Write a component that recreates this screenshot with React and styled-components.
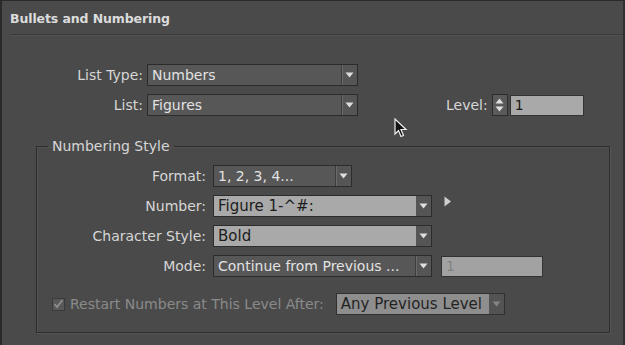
import React from "react";
import styled, { createGlobalStyle } from "styled-components";

const GlobalStyle = createGlobalStyle`
  html, body {
    margin: 0;
    padding: 0;
    background: #4a4a4a;
  }
  body {
    font-family: "DejaVu Sans", "Liberation Sans", sans-serif;
  }
`;

const Window = styled.div`
  width: 625px;
  height: 345px;
  box-sizing: border-box;
  background: #4a4a4a;
  border-left: 2px solid #2a2a2a;
  border-right: 2px solid #2f2f2f;
  border-top: 1px solid #2a2a2a;
  overflow: hidden;
  position: relative;
`;

const Header = styled.div`
  margin-left: 8px;
  height: 33px;
  border-bottom: 1px solid #3a3a3a;
  box-shadow: 0 1px 0 #515151;
  display: flex;
  align-items: center;
`;

const Title = styled.div`
  color: #dcdcdc;
  font-size: 12.5px;
  font-weight: bold;
  letter-spacing: -0.1px;
  padding-top: 1px;
`;

const Body = styled.div`
  padding-top: 29px;
`;

const TopGrid = styled.div`
  display: grid;
  grid-template-columns: 141px 210px;
  column-gap: 4px;
  row-gap: 8px;
  align-items: center;
`;

const Label = styled.div`
  color: ${(p) => (p.$dim ? "#8a8a8a" : "#d6d6d6")};
  font-size: 14px;
  text-align: right;
  white-space: nowrap;
`;

const Select = styled.div`
  box-sizing: border-box;
  width: ${(p) => p.$w}px;
  height: 22px;
  display: flex;
  align-items: stretch;
  border: 1px solid #2c2c2c;
  background: #565656;
  opacity: ${(p) => (p.$dim ? 0.85 : 1)};
`;

const SelectText = styled.div`
  flex: 1;
  display: flex;
  align-items: center;
  padding-left: 4px;
  font-size: ${(p) => (p.$light ? 15 : 14)}px;
  white-space: nowrap;
  overflow: hidden;
  color: ${(p) => (p.$light ? "#1c1c1c" : "#e2e2e2")};
  background: ${(p) => (p.$light ? (p.$dim ? "#9a9a9a" : "#a9a9a9") : "#575757")};
`;

const ArrowBox = styled.div`
  width: 15px;
  display: flex;
  align-items: center;
  justify-content: center;
  background: #555;
  border-left: ${(p) => (p.$split ? "1px solid #3c3c3c" : "none")};
  box-shadow: ${(p) => (p.$split ? "inset 1px 0 0 #6a6a6a" : "none")};
`;

const Down = ({ color = "#dedede" }) => (
  <svg width="9" height="6" viewBox="0 0 9 6">
    <path d="M0.5 0.5 H8.5 L4.5 5.5 Z" fill={color} />
  </svg>
);

const Dropdown = ({ w, text, light, dim, split = true }) => (
  <Select $w={w} $dim={dim}>
    <SelectText $light={light} $dim={dim}>{text}</SelectText>
    <ArrowBox $split={split}>
      <Down color={dim ? "#8e8e8e" : "#dedede"} />
    </ArrowBox>
  </Select>
);

const LevelGroup = styled.div`
  display: flex;
  align-items: center;
  grid-column: 3;
  margin-left: 85px;
`;

const LevelLabel = styled(Label)`
  margin-right: 4px;
`;

const Spinner = styled.div`
  box-sizing: border-box;
  width: 16px;
  height: 22px;
  border: 1px solid #2c2c2c;
  background: #5a5a5a;
  display: flex;
  flex-direction: column;
  align-items: center;
  justify-content: space-around;
  padding: 2px 0;
  margin-right: 2px;
`;

const Field = styled.div`
  box-sizing: border-box;
  width: ${(p) => p.$w}px;
  height: 21px;
  border: 1px solid #333;
  background: ${(p) => (p.$dim ? "#a2a2a2" : "#a9a9a9")};
  color: ${(p) => (p.$dim ? "#828282" : "#1a1a1a")};
  font-size: 14px;
  display: flex;
  align-items: center;
  padding-left: 4px;
  margin-left: ${(p) => p.$ml || 0}px;
`;

const Group = styled.fieldset`
  margin: 22px 13px 0 34px;
  padding: 4px 0 16px 0;
  border: 1px solid #2d2d2d;
  box-shadow: 1px 1px 0 #555, inset 1px 1px 0 #525252;
  height: 195px;
  box-sizing: border-box;
`;

const Legend = styled.legend`
  color: #d6d6d6;
  font-size: 14px;
  padding: 0 4px;
  margin-left: 11px;
`;

const GroupGrid = styled.div`
  display: grid;
  grid-template-columns: 169px auto;
  column-gap: 7px;
  row-gap: 8px;
  align-items: center;
  justify-items: start;
  margin-top: 7px;

  & > ${Label} {
    justify-self: end;
  }
`;

const Row = styled.div`
  display: flex;
  align-items: center;
`;

const Play = styled.svg`
  margin-left: 12px;
  margin-top: -9px;
`;

const CheckRow = styled.div`
  display: flex;
  align-items: center;
  margin-top: 16px;
  margin-left: 15px;
`;

const Check = styled.div`
  box-sizing: border-box;
  width: 13px;
  height: 13px;
  background: #585858;
  border: 1px solid #3a3a3a;
  display: flex;
  align-items: center;
  justify-content: center;
  margin-right: 5px;
`;

const CheckLabel = styled(Label)`
  margin-right: 12px;
`;

const Cursor = styled.svg`
  position: absolute;
  left: 392px;
  top: 117px;
`;

export default function App() {
  return (
    <>
      <GlobalStyle />
      <Window>
        <Header>
          <Title>Bullets and Numbering</Title>
        </Header>
        <Body>
          <TopGrid>
            <Label>List Type:</Label>
            <Dropdown w={211} text="Numbers" />
            <div />
            <Label>List:</Label>
            <Dropdown w={211} text="Figures" />
            <LevelGroup>
              <LevelLabel>Level:</LevelLabel>
              <Spinner>
                <svg width="9" height="6" viewBox="0 0 9 6">
                  <path d="M0.5 5.5 H8.5 L4.5 0.5 Z" fill="#dedede" />
                </svg>
                <Down />
              </Spinner>
              <Field $w={74}>1</Field>
            </LevelGroup>
          </TopGrid>
          <Group>
            <Legend>Numbering Style</Legend>
            <GroupGrid>
              <Label>Format:</Label>
              <Dropdown w={139} text="1, 2, 3, 4..." />
              <Label>Number:</Label>
              <Row>
                <Dropdown w={219} text="Figure 1-^#:" light split={false} />
                <Play width="8" height="11" viewBox="0 0 8 11">
                  <path d="M0.5 0.5 L7 5.5 L0.5 10.5 Z" fill="#cfcfcf" />
                </Play>
              </Row>
              <Label>Character Style:</Label>
              <Dropdown w={219} text="Bold" light split={false} />
              <Label>Mode:</Label>
              <Row>
                <Dropdown w={219} text="Continue from Previous ..." />
                <Field $w={102} $ml={9} $dim>
                  1
                </Field>
              </Row>
            </GroupGrid>
            <CheckRow>
              <Check>
                <svg width="11" height="10" viewBox="0 0 11 10">
                  <path d="M1.5 5 L4 8 L9.5 1" stroke="#8e8e8e" strokeWidth="1.8" fill="none" />
                </svg>
              </Check>
              <CheckLabel $dim>Restart Numbers at This Level After:</CheckLabel>
              <Dropdown w={169} text="Any Previous Level" light dim split={false} />
            </CheckRow>
          </Group>
        </Body>
        <Cursor width="14" height="20" viewBox="0 0 14 20">
          <path d="M1 1 L1 16 L4.5 12.5 L7 18.5 L9.5 17.5 L7 11.5 L12 11.5 Z" fill="#111" stroke="#eee" strokeWidth="1.2" />
        </Cursor>
      </Window>
    </>
  );
}
